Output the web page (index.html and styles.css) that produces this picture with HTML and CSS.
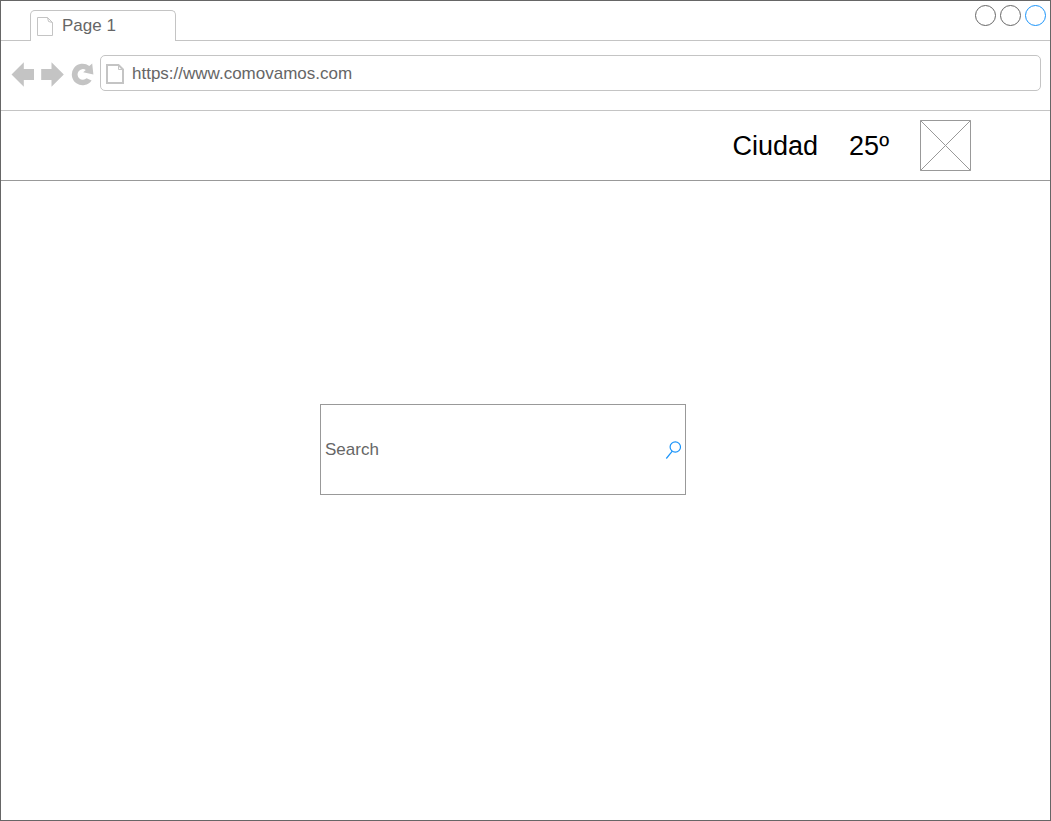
FILE: index.html
```html
<!DOCTYPE html>
<html lang="es">
<head>
<meta charset="utf-8">
<meta name="viewport" content="width=device-width, initial-scale=1">
<title>Page 1</title>
<link rel="stylesheet" href="styles.css">
</head>
<body>
<div class="window">
  <div class="tabbar">
    <button class="tab" type="button">
      <svg class="tab-icon" width="18" height="20" viewBox="0 0 18 20" aria-hidden="true">
        <path d="M1.500 1.500H11.500L16.500 6.500V19.500H1.500ZM11.500 1.500L12.500 5.500L16.500 6.500" fill="none" stroke="#c4c4c4"/>
      </svg>
      <span>Page 1</span>
    </button>
    <div class="controls">
      <button class="control" type="button" aria-label="Minimize"></button>
      <button class="control" type="button" aria-label="Maximize"></button>
      <button class="control control-close" type="button" aria-label="Close"></button>
    </div>
  </div>

  <div class="toolbar">
    <button class="tool" type="button" aria-label="Back">
      <svg width="24" height="26" viewBox="0 0 24 26" aria-hidden="true"><path d="M0.500 13.500L12.800 1.200V8H23V19H12.800V25.800Z" fill="#c4c4c4"/></svg>
    </button>
    <button class="tool" type="button" aria-label="Forward">
      <svg width="24" height="26" viewBox="0 0 24 26" aria-hidden="true"><path d="M22.800 13.500L10.500 1.200V8H0.200V19H10.500V25.800Z" fill="#c4c4c4"/></svg>
    </button>
    <button class="tool" type="button" aria-label="Reload">
      <svg width="24" height="26" viewBox="0 0 24 26" aria-hidden="true">
        <path d="M20.600 19.500A10.800 10.800 0 1 1 18.300 5L21.200 2.500L22.400 13.600L12.200 11.200L14.800 9A5.300 5.300 0 1 0 15.600 17.200Z" fill="#c4c4c4"/>
      </svg>
    </button>
    <label class="address">
      <svg width="18" height="20" viewBox="0 0 18 20" aria-hidden="true">
        <path d="M1 1H12.500L17 5.500V19H1Z" fill="none" stroke="#c4c4c4" stroke-width="2"/>
        <path d="M12.500 1V5.500H17" fill="none" stroke="#c4c4c4"/>
      </svg>
      <input class="address-input" type="text" aria-label="Address" value="https://www.comovamos.com">
    </label>
  </div>

  <header class="site-header">
    <span>Ciudad</span>
    <span>25º</span>
    <svg class="placeholder" width="51" height="51" viewBox="0 0 51 51" role="img" aria-label="Weather">
      <path d="M0.500 0.500H50.500V50.500H0.500Z" fill="none" stroke="#999"/>
      <path d="M0.500 0.500L50.500 50.500M50.500 0.500L0.500 50.500" fill="none" stroke="#999"/>
    </svg>
  </header>

  <main class="content">
    <form class="search">
      <input class="search-input" type="text" placeholder="Search" aria-label="Search">
      <button class="search-button" type="submit" aria-label="Submit search">
        <svg width="16" height="20" viewBox="0 0 16 20" aria-hidden="true">
          <circle cx="10.300" cy="7" r="5.200" fill="none" stroke="#1a94fa" stroke-width="1.200"/>
          <path d="M7.300 11.200L1.300 18.500" fill="none" stroke="#1a94fa" stroke-width="1.200"/>
        </svg>
      </button>
    </form>
  </main>
</div>
</body>
</html>
```
FILE: styles.css
```css
* {
  box-sizing: border-box;
}

body {
  margin: 0;
  background: #fff;
  color: #666;
  font: 17px/20px "Liberation Sans", Arial, sans-serif;
}

button,
input {
  margin: 0;
  padding: 0;
  border: 0;
  background: none;
  color: inherit;
  font: inherit;
}

svg {
  display: block;
  flex: none;
}

.window {
  display: flex;
  flex-direction: column;
  min-height: 100vh;
  border: 1px solid #666;
}

.tabbar {
  display: flex;
  align-items: flex-end;
  justify-content: space-between;
  height: 40px;
  padding: 0 4px 0 29px;
  border-bottom: 1px solid #c4c4c4;
}

.tab {
  display: flex;
  gap: 8px;
  width: 146px;
  height: 31px;
  margin-bottom: -1px;
  padding: 5px 6px 0 5px;
  border: 1px solid #c4c4c4;
  border-bottom: 0;
  border-radius: 5px 5px 0 0;
  background: #fff;
}

.controls {
  display: flex;
  align-self: flex-start;
  gap: 4px;
  padding-top: 4px;
}

.control {
  width: 21px;
  height: 21px;
  border: 1px solid #666;
  border-radius: 50%;
}

.control-close {
  border-color: #1a94fa;
}

.toolbar {
  display: flex;
  align-items: center;
  gap: 6px;
  padding: 14px 9px 19px 10px;
  border-bottom: 1px solid #c4c4c4;
}

.tool {
  padding-top: 2px;
}

.address {
  display: flex;
  flex: 1;
  align-items: center;
  gap: 8px;
  height: 36px;
  margin-left: -1px;
  padding: 1px 5px 0;
  border: 1px solid #c4c4c4;
  border-radius: 5px;
}

.address-input {
  flex: 1;
  min-width: 0;
}

.site-header {
  display: flex;
  align-items: center;
  justify-content: flex-end;
  height: 70px;
  padding-right: 79px;
  border-bottom: 1px solid #999;
  color: #000;
  font-size: 27px;
  line-height: 32px;
  gap: 31px;
}

.content {
  display: flex;
  flex: 1;
  align-items: flex-start;
  justify-content: center;
  padding: 223px 45px 24px 0;
}

.search {
  display: flex;
  align-items: center;
  width: 366px;
  height: 91px;
  padding: 0 4px;
  border: 1px solid #999;
}

.search-input {
  flex: 1;
  min-width: 0;
  height: 100%;
}

.search-input::placeholder {
  color: #666;
  opacity: 1;
}
```
